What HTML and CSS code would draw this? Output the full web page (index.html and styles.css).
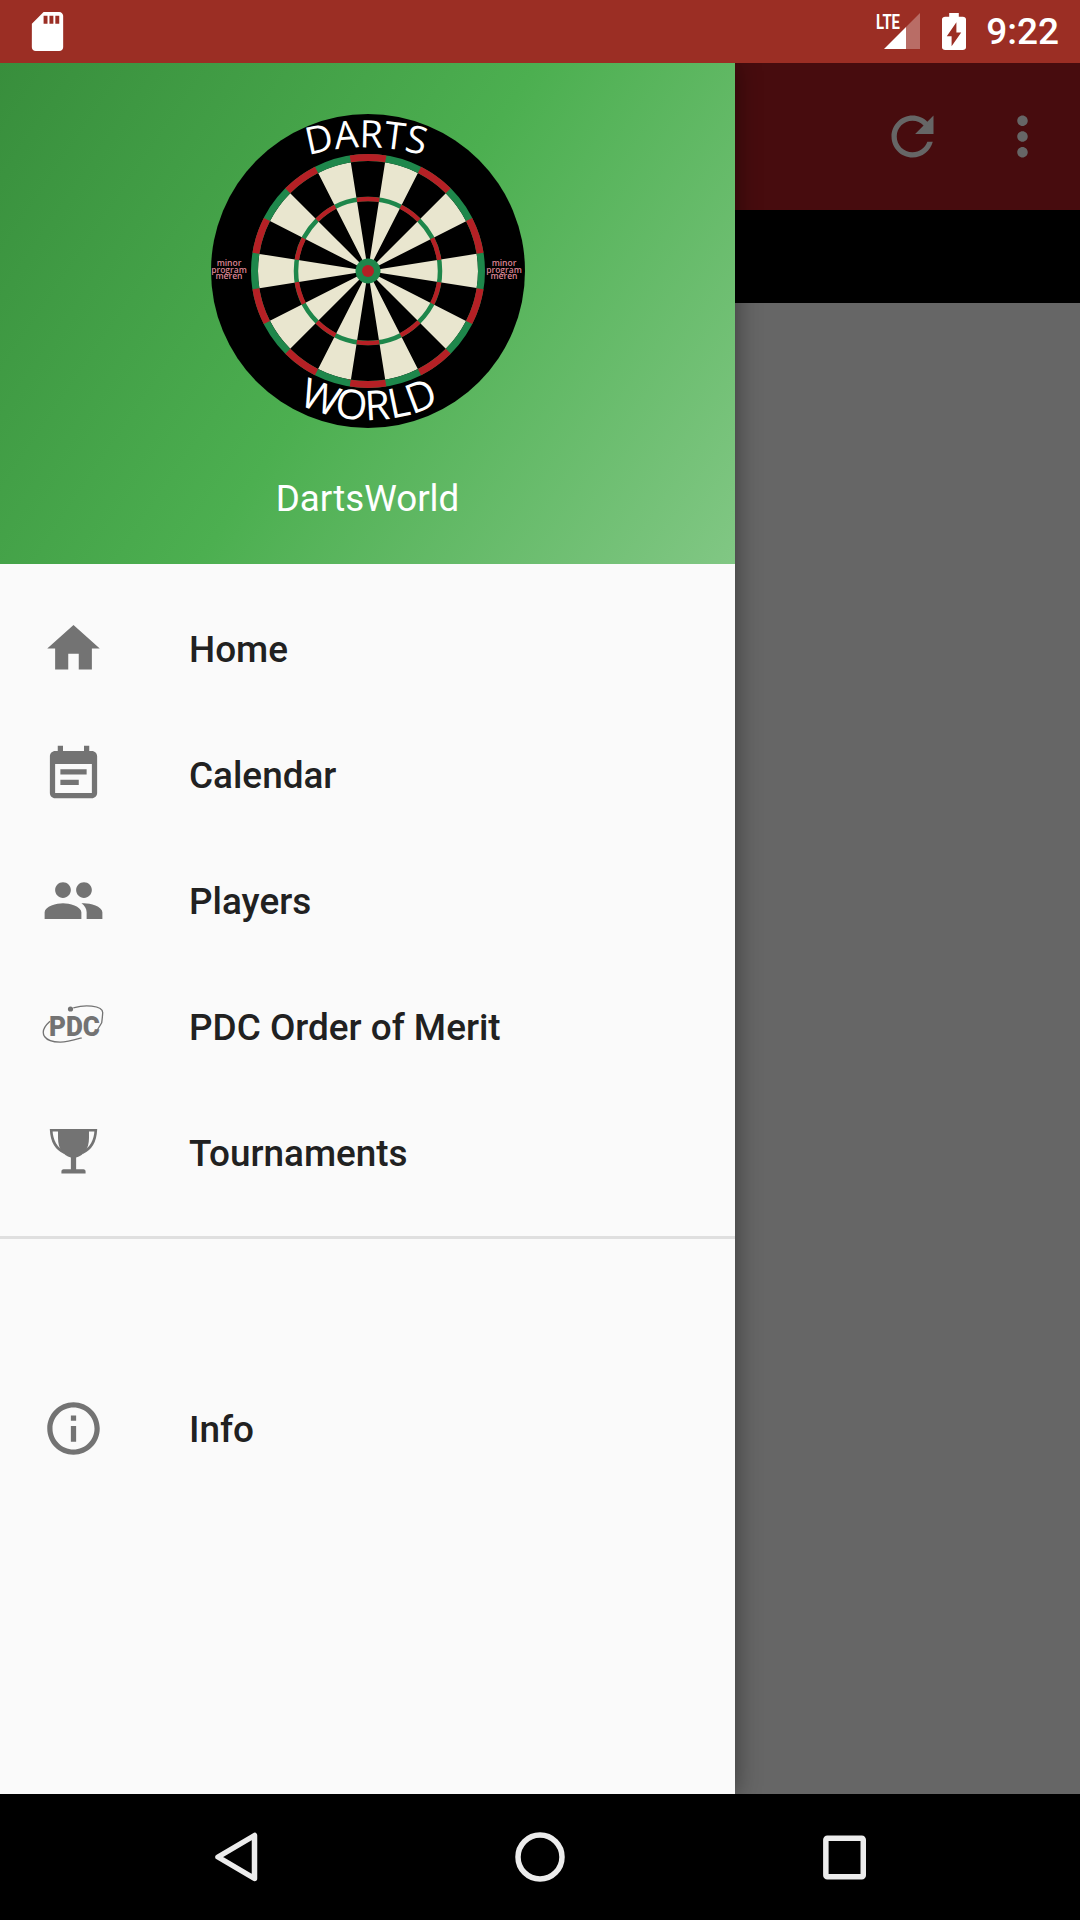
FILE: index.html
```html
<!DOCTYPE html>
<html lang="en">
<head>
<meta charset="utf-8">
<title>DartsWorld</title>
<link rel="stylesheet" href="styles.css">
</head>
<body>
<div class="screen">
  <header class="status">
    <svg class="sd" viewBox="0 0 24 24"><path class="fill-white" d="M18 2h-8L4.020 8 4 20c0 1.100.9 2 2 2h12c1.100 0 2-.9 2-2V4c0-1.100-.9-2-2-2zm-6 6h-2V4h2v4zm3 0h-2V4h2v4zm3 0h-2V4h2v4z"/></svg>
    <div class="status-right">
      <svg class="signal" viewBox="0 -4 46 41">
        <path class="fill-faint" d="M45 0v36H31V14z"/>
        <path class="fill-white" d="M9 36 31 14v22z"/>
        <text class="lte" x="1" y="16" textLength="24" lengthAdjust="spacingAndGlyphs">LTE</text>
      </svg>
      <svg class="battery" viewBox="7 2 10 20" preserveAspectRatio="none"><path class="fill-white" fill-rule="evenodd" d="M15.670 4H14V2h-4v2H8.330C7.600 4 7 4.600 7 5.330v15.330C7 21.400 7.600 22 8.330 22h7.330c.74 0 1.340-.6 1.340-1.330V5.330C17 4.600 16.400 4 15.670 4zM11 20v-5.500H9L13 7v5.500h2L11 20z"/></svg>
      <span class="clock">9:22</span>
    </div>
  </header>

  <main class="main">
    <div class="toolbar">
      <svg class="tool-icon" viewBox="0 0 24 24"><path class="fill-dim" d="M17.650 6.350C16.200 4.900 14.210 4 12 4c-4.420 0-7.990 3.580-7.990 8s3.570 8 7.990 8c3.730 0 6.840-2.550 7.730-6h-2.080c-.82 2.330-3.040 4-5.650 4-3.310 0-6-2.690-6-6s2.690-6 6-6c1.660 0 3.140.69 4.220 1.780L13 11h7V4l-2.350 2.350z"/></svg>
      <svg class="tool-icon" viewBox="0 0 24 24"><path class="fill-dim" d="M12 8c1.100 0 2-.9 2-2s-.9-2-2-2-2 .9-2 2 .9 2 2 2zm0 2c-1.100 0-2 .9-2 2s.9 2 2 2 2-.9 2-2-.9-2-2-2zm0 6c-1.100 0-2 .9-2 2s.9 2 2 2 2-.9 2-2-.9-2-2-2z"/></svg>
    </div>
    <div class="tabs"></div>
    <div class="content"></div>

    <aside class="drawer">
      <div class="drawer-header">
        <svg class="board" viewBox="0 0 320 320">
          <defs>
            <path id="arc-top" d="M7 100A211 211 0 0 1 309 100"/>
            <path id="arc-bottom" d="M0 148A161 161 0 0 0 322 148"/>
          </defs>
          <circle class="board-base" cx="160" cy="160" r="157"/>
          <circle class="wedges" cx="160" cy="160" r="55" pathLength="20" transform="rotate(-9 160 160)"/>
          <circle class="ring-green ring-double" cx="160" cy="160" r="113.5"/>
          <circle class="ring-red ring-double" cx="160" cy="160" r="113.5" pathLength="20" transform="rotate(9 160 160)"/>
          <circle class="ring-green ring-treble" cx="160" cy="160" r="72"/>
          <circle class="ring-red ring-treble" cx="160" cy="160" r="72" pathLength="20" transform="rotate(9 160 160)"/>
          <circle class="bull-outer" cx="160" cy="160" r="12.5"/>
          <circle class="bull-inner" cx="160" cy="160" r="6"/>
          <text class="board-word word-top"><textPath href="#arc-top" startOffset="50%" text-anchor="middle">DARTS</textPath></text>
          <text class="board-word word-bottom"><textPath href="#arc-bottom" startOffset="50%" text-anchor="middle">WORLD</textPath></text>
          <g class="sponsor">
            <text x="21" y="155">minor</text>
            <text x="21" y="161.5">program</text>
            <text x="21" y="168">meren</text>
            <text x="296" y="155">minor</text>
            <text x="296" y="161.5">program</text>
            <text x="296" y="168">meren</text>
          </g>
        </svg>
        <div class="drawer-title">DartsWorld</div>
      </div>

      <nav class="menu">
        <div class="menu-group">
          <div class="menu-item">
            <svg class="menu-icon" viewBox="0 0 24 24"><path d="M10 20v-6h4v6h5v-8h3L12 3 2 12h3v8z"/></svg>
            <span class="menu-label">Home</span>
          </div>
          <div class="menu-item">
            <svg class="menu-icon" viewBox="0 0 24 24"><path d="M17 10H7v2h10v-2zm2-7h-1V1h-2v2H8V1H6v2H5c-1.110 0-1.990.9-1.990 2L3 19c0 1.100.89 2 2 2h14c1.100 0 2-.9 2-2V5c0-1.100-.9-2-2-2zm0 16H5V8h14v11zm-5-5H7v2h7v-2z"/></svg>
            <span class="menu-label">Calendar</span>
          </div>
          <div class="menu-item">
            <svg class="menu-icon" viewBox="0 0 24 24"><path d="M16 11c1.660 0 2.990-1.340 2.990-3S17.660 5 16 5c-1.660 0-3 1.340-3 3s1.340 3 3 3zm-8 0c1.660 0 2.990-1.340 2.990-3S9.660 5 8 5C6.340 5 5 6.340 5 8s1.340 3 3 3zm0 2c-2.330 0-7 1.170-7 3.500V19h14v-2.500c0-2.330-4.670-3.500-7-3.500zm8 0c-.29 0-.62.02-.97.05 1.160.84 1.970 1.970 1.970 3.450V19h6v-2.500c0-2.330-4.670-3.500-7-3.500z"/></svg>
            <span class="menu-label">Players</span>
          </div>
          <div class="menu-item">
            <svg class="menu-icon" viewBox="0 0 63 63">
              <path class="pdc-swoosh" d="M39.700 42.800C32 45 24 47.400 18 47.200 10 47 5 45 2.500 41.500 0 37.500 1.500 32 8 26.200"/>
              <path class="pdc-swoosh" d="M31.300 12.800C38 11 45 10.500 49.700 11.200 56 12 61 14 60.700 17.800 60.500 22 60 25 59.700 27.800 57 33 55 36 51.300 39.500"/>
              <circle cx="28.500" cy="14" r="2.600"/>
              <text class="pdc-text" x="7" y="40.500" textLength="51" lengthAdjust="spacingAndGlyphs">PDC</text>
            </svg>
            <span class="menu-label">PDC Order of Merit</span>
          </div>
          <div class="menu-item">
            <svg class="menu-icon" viewBox="0 0 24 24">
              <path d="M6.100 3h11.800v3.500c0 4-1.800 6.600-4.900 7.400v4.500h2.800c.5 0 .8.4.8.8v.8H7.400v-.8c0-.4.3-.8.8-.8H11v-4.500C7.900 13.100 6.100 10.500 6.100 6.500z"/>
              <path class="trophy-handle" d="M6.500 3.500H3.500C3.700 7.500 5.200 10.500 8.500 12"/>
              <path class="trophy-handle" d="M17.500 3.500h3C20.300 7.500 18.800 10.500 15.500 12"/>
            </svg>
            <span class="menu-label">Tournaments</span>
          </div>
        </div>
        <div class="menu-group menu-group-second">
          <div class="menu-item">
            <svg class="menu-icon" viewBox="0 0 24 24"><path d="M11 7h2v2h-2zm0 4h2v6h-2zm1-9C6.480 2 2 6.480 2 12s4.480 10 10 10 10-4.480 10-10S17.520 2 12 2zm0 18c-4.410 0-8-3.590-8-8s3.590-8 8-8 8 3.590 8 8-3.590 8-8 8z"/></svg>
            <span class="menu-label">Info</span>
          </div>
        </div>
      </nav>
    </aside>
  </main>

  <footer class="navbar">
    <svg class="nav-icon" viewBox="0 0 63 63"><path class="nav-stroke" d="M49.500 9.500v43L13 31z"/></svg>
    <svg class="nav-icon" viewBox="0 0 63 63"><circle class="nav-stroke" cx="31" cy="31" r="22"/></svg>
    <svg class="nav-icon" viewBox="0 0 63 63"><rect class="nav-stroke" x="12.850" y="12.250" width="37.400" height="38.500" rx="1.500"/></svg>
  </footer>
</div>
</body>
</html>
```
FILE: styles.css
```css
* { box-sizing: border-box; }
html, body { margin: 0; padding: 0; }
body { width: 1080px; height: 1920px; overflow: hidden; font-family: Roboto, "Noto Sans", sans-serif; background: #000; }
svg { display: block; flex: none; }

.screen { width: 1080px; height: 1920px; display: flex; flex-direction: column; }

/* status bar */
.status { height: 63px; flex: none; background: #9b2e24; display: flex; align-items: center; justify-content: space-between; padding: 0 21px 0 24px; }
.sd { width: 47px; height: 47px; }
.status-right { display: flex; align-items: center; }
.signal { width: 46px; height: 41px; margin-top: -5px; }
.battery { width: 24px; height: 37px; margin-left: 21px; margin-top: -1px; }
.clock { margin-left: 20px; color: #fff; font-size: 37px; font-weight: 500; line-height: 63px; }
.fill-white { fill: #fff; }
.fill-faint { fill: rgba(255, 255, 255, .3); }
.fill-dim { fill: #666; }
.lte { font-family: Roboto, sans-serif; font-weight: 700; font-size: 21px; fill: #fff; }

/* page under the drawer */
.main { flex: 1; position: relative; overflow: hidden; display: flex; flex-direction: column; background: #666; }
.toolbar { height: 147px; flex: none; background: #470c0e; display: flex; justify-content: flex-end; align-items: center; gap: 47px; padding-right: 26.5px; }
.tool-icon { width: 63px; height: 63px; }
.tabs { height: 93px; flex: none; background: #000; }
.content { flex: 1; background: #666; }

/* drawer */
.drawer { position: absolute; left: 0; top: 0; bottom: 0; width: 735px; background: #fafafa; box-shadow: 0 0 24px rgba(0, 0, 0, .45); display: flex; flex-direction: column; }
.drawer-header { height: 501px; flex: none; padding-top: 48px; display: flex; flex-direction: column; align-items: center; background: linear-gradient(124.3deg, #388e3c 0%, #4caf50 50%, #81c784 100%); }
.board { width: 320px; height: 320px; }
.drawer-title { margin-top: 46px; color: #fff; font-size: 36.75px; line-height: 44px; }

.board-base { fill: #000; }
.wedges { fill: none; stroke: #e9e6cf; stroke-width: 110; stroke-dasharray: 1 1; }
.ring-green { fill: none; stroke: #1e874b; }
.ring-red { fill: none; stroke: #b52025; stroke-dasharray: 1 1; }
.ring-double { stroke-width: 7; }
.ring-treble { stroke-width: 4.5; }
.bull-outer { fill: #1e874b; }
.bull-inner { fill: #b52025; }
.board-word { font-family: "Open Sans", sans-serif; fill: #fff; }
.word-top { font-size: 38px; }
.word-bottom { font-size: 41px; }
.sponsor { font-family: "Open Sans", sans-serif; font-size: 8.5px; font-weight: 600; fill: #dc8593; text-anchor: middle; }

/* menu */
.menu { flex: 1; display: flex; flex-direction: column; padding-top: 21px; }
.menu-group { padding-bottom: 21px; border-bottom: 3px solid #dfdfdf; }
.menu-group-second { margin-top: 126px; border-bottom: 0; }
.menu-item { height: 126px; display: flex; align-items: center; padding-left: 42px; gap: 84px; color: #212121; font-size: 36.9px; font-weight: 500; }
.menu-label { padding-top: 2px; }
.menu-icon { width: 63px; height: 63px; fill: #737373; }
.pdc-swoosh { fill: none; stroke: #737373; stroke-width: 1.3; }
.pdc-text { font-family: Roboto, sans-serif; font-weight: 900; font-size: 27px; fill: #737373; }
.trophy-handle { fill: none; stroke: #737373; stroke-width: 1; }

/* navigation bar */
.navbar { height: 126px; flex: none; background: #000; display: flex; align-items: center; justify-content: center; gap: 241px; }
.nav-icon { width: 63px; height: 63px; }
.nav-stroke { fill: none; stroke: #ececec; stroke-width: 5.5; stroke-linejoin: round; }
```
